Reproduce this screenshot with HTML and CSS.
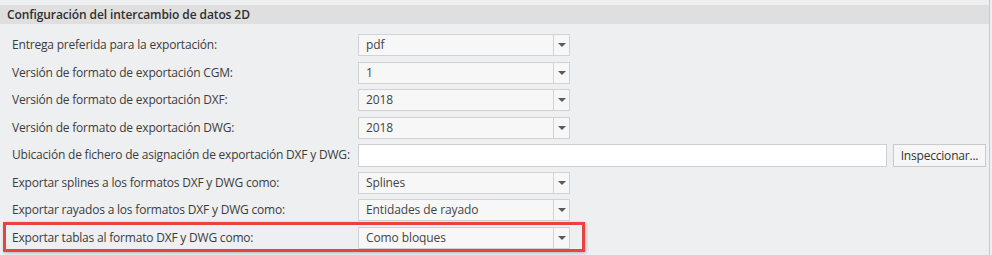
FILE: index.html
```html
<!DOCTYPE html>
<html lang="es">
<head>
  <meta charset="UTF-8">
  <meta name="viewport" content="width=device-width, initial-scale=1.0">
  <title>Intercambio de datos 2D</title>
  <link rel="stylesheet" href="styles.css">
</head>
<body>
  <div id="panel">
    <div class="section-title">Configuración del intercambio de datos 2D</div>

    <div class="rows">
      <div class="row">
        <span class="label">Entrega preferida para la exportación:</span>
        <div class="select"><span class="value">pdf</span><span class="arrow"></span></div>
      </div>
      <div class="row">
        <span class="label">Versión de formato de exportación CGM:</span>
        <div class="select"><span class="value">1</span><span class="arrow"></span></div>
      </div>
      <div class="row">
        <span class="label">Versión de formato de exportación DXF:</span>
        <div class="select"><span class="value">2018</span><span class="arrow"></span></div>
      </div>
      <div class="row">
        <span class="label">Versión de formato de exportación DWG:</span>
        <div class="select"><span class="value">2018</span><span class="arrow"></span></div>
      </div>
      <div class="row row-path">
        <span class="label">Ubicación de fichero de asignación de exportación DXF y DWG:</span>
        <div class="path-input"></div>
        <button class="browse">Inspeccionar...</button>
      </div>
      <div class="row">
        <span class="label">Exportar splines a los formatos DXF y DWG como:</span>
        <div class="select"><span class="value">Splines</span><span class="arrow"></span></div>
      </div>
      <div class="row">
        <span class="label">Exportar rayados a los formatos DXF y DWG como:</span>
        <div class="select"><span class="value">Entidades de rayado</span><span class="arrow"></span></div>
      </div>
      <!-- fila marcada en rojo -->
      <div class="row marked">
        <span class="label">Exportar tablas al formato DXF y DWG como:</span>
        <div class="select"><span class="value">Como bloques</span><span class="arrow"></span></div>
        <div class="mark"></div>
      </div>
    </div>
  </div>
</body>
</html>
```

FILE: styles.css
```css
* {margin:0; padding:0; box-sizing: border-box;}
body{
  background-color: #eeeff1;
  font-family: "Open Sans", "Noto Sans", sans-serif;
  font-size: 12px;
  color: #3c3c3c;
}
#panel{
  height: 255px;
  width: 990px;
  padding-top: 5px;
  border-right: 1px solid #c9cacc;
}
.section-title{
  height: 19px;
  line-height: 19px;
  background-color: #dfdfdf;
  padding-left: 7px;
  font-weight: 600;
  letter-spacing: -0.1px;
  color: #2f2f2f;
}
.rows{
  padding: 10px 0 0 12px;
}
.row{
  position: relative;
  height: 27.5px;
  display: grid;
  grid-template-columns: 346px 212px;
  align-items: start;
}
.row-path{
  grid-template-columns: 346px 529px 99px;
}
.label{
  line-height: 22px;
  white-space: nowrap;
  letter-spacing: -0.2px;
}
.select{
  height: 22px;
  display: flex;
  background-color: #f7f7f7;
  border: 1px solid #d2d2d2;
}
.select .value{
  flex: 1;
  padding-left: 7px;
  line-height: 20px;
  color: #444;
  letter-spacing: -0.1px;
}
.select .arrow{
  width: 16px;
  border-left: 1px solid #d2d2d2;
  display: flex;
  justify-content: center;
  align-items: center;
}
.select .arrow::before{
  content: "";
  border-left: 4px solid transparent;
  border-right: 4px solid transparent;
  border-top: 4px solid #5a5a5a;
}
.path-input{
  height: 23px;
  background-color: #fff;
  border: 1px solid #cfcfcf;
}
.browse{
  height: 23px;
  margin-left: 6px;
  font: inherit;
  letter-spacing: -0.2px;
  color: #333;
  background-color: #f6f6f6;
  border: 1px solid #c9c9c9;
  text-align: center;
}
/* recuadro rojo de resalte */
.mark{
  position: absolute;
  left: -9px;
  top: -5px;
  width: 582px;
  height: 30px;
  border: 3px solid #ea4241;
  box-shadow: 1px 1px 3px rgba(0,0,0,0.25);
  pointer-events: none;
}
```
